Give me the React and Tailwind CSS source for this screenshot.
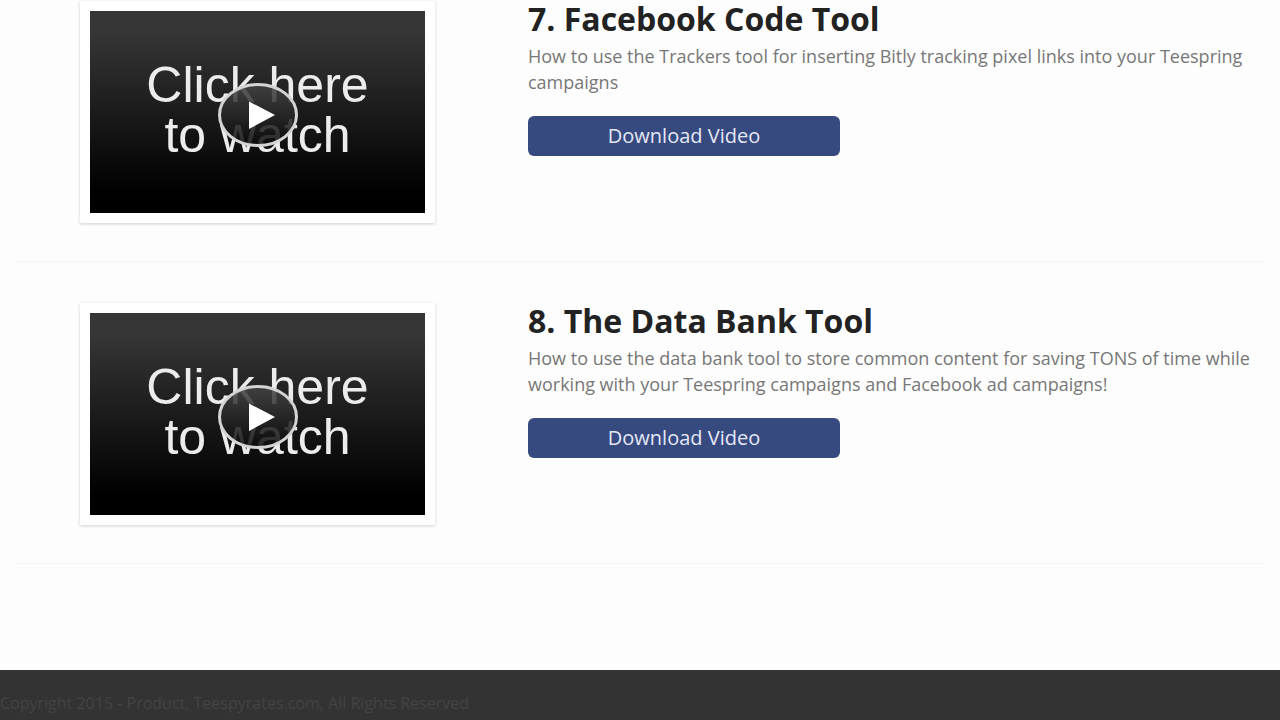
const lessons = [
  {
    id: 7,
    title: '7. Facebook Code Tool',
    text: 'How to use the Trackers tool for inserting Bitly tracking pixel links into your Teespring campaigns',
  },
  {
    id: 8,
    title: '8. The Data Bank Tool',
    text: 'How to use the data bank tool to store common content for saving TONS of time while working with your Teespring campaigns and Facebook ad campaigns!',
  },
];

function PlayIcon() {
  return (
    <svg viewBox="0 0 80 64" className="absolute left-1/2 top-18 h-16 w-20 -translate-x-1/2" aria-hidden="true">
      <defs>
        <linearGradient id="disc" x1="0" y1="0" x2="0" y2="1">
          <stop offset="0" stopColor="#444" />
          <stop offset="1" stopColor="#0a0a0a" />
        </linearGradient>
      </defs>
      <ellipse cx="40" cy="32" rx="38.5" ry="30.5" fill="url(#disc)" fillOpacity="0.86" stroke="#d4d4d4" strokeWidth="3" />
      <path d="M31 18.5 L57 32 L31 46 Z" fill="#fff" />
    </svg>
  );
}

function Thumbnail({ title }) {
  return (
    <a
      href="#watch"
      aria-label={`Watch ${title}`}
      className="block w-[355px] shrink-0 bg-white p-2.5 shadow-[0_1px_3px_rgba(0,0,0,0.18)]"
    >
      <span className="relative flex h-[202px] items-center justify-center bg-linear-to-b/srgb from-[#363636] from-10% to-black to-90% pb-1 text-center font-['Liberation_Sans',sans-serif] text-[50px] leading-[50px] text-[#ececec]">
        <span>
          Click here
          <br />
          to watch
        </span>
        <PlayIcon />
      </span>
    </a>
  );
}

function Lesson({ lesson }) {
  return (
    <section className="mx-3 flex gap-[93px] border-b border-[#f7f7f7] pb-[38px] pl-[68px] pr-2">
      <Thumbnail title={lesson.title} />
      <div className="min-w-0 flex-1">
        <h2 className="text-[32px] leading-[36px] font-bold text-[#222]">{lesson.title}</h2>
        <p className="mt-1.5 text-[18px] leading-[26px] text-[#777]">{lesson.text}</p>
        <button type="button" className="mt-[21px] h-10 w-[312px] rounded-md bg-[#374a80] text-xl leading-none text-[#e4e8f5]">
          Download Video
        </button>
      </div>
    </section>
  );
}

export default function App() {
  return (
    <div className="flex min-h-screen flex-col bg-[#fdfdfd] font-['Open_Sans',sans-serif]">
      <main className="flex flex-1 flex-col gap-[41px] pt-px pb-[106px]">
        {lessons.map(lesson => <Lesson key={lesson.id} lesson={lesson} />)}
      </main>
      <footer className="bg-[#333] pt-[23px] pb-[7px] text-base leading-5 text-[#434343]">
        Copyright 2015 - Product, Teespyrates.com, All Rights Reserved
      </footer>
    </div>
  );
}
